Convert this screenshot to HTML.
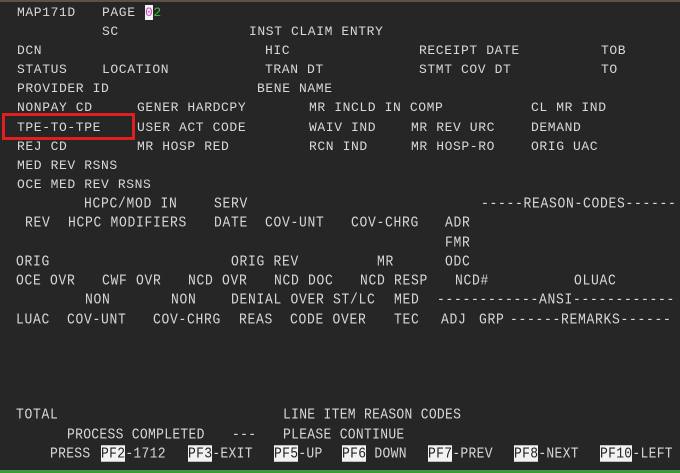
<!DOCTYPE html>
<html><head><meta charset="utf-8"><style>
html,body{margin:0;padding:0;}
body{width:680px;height:473px;background:#262627;position:relative;overflow:hidden;font-family:"Liberation Mono",monospace;color:#d8d8d8;}
.t{position:absolute;white-space:pre;font-size:13px;letter-spacing:0.6px;line-height:15px;}
.n{position:absolute;white-space:pre;font-size:13px;letter-spacing:0.7px;line-height:15px;transform:scaleY(1.1);}
.b{position:absolute;white-space:pre;font-size:13px;letter-spacing:0.3px;line-height:15px;transform:scaleY(1.1);}
.pf{background:#f2f2f2;color:#222;}
</style></head><body>
<div style="position:absolute;left:0;top:0;width:680px;height:2px;background:#5e5148"></div>
<div style="position:absolute;left:0;top:470px;width:680px;height:3px;background:#3a9a3a"></div>
<div style="position:absolute;left:2px;top:113px;width:127px;height:21px;border:3px solid #e02020"></div>

<div class="t" style="left:17px;top:5px">MAP171D</div>
<div class="t" style="left:102px;top:5px">PAGE</div>
<div class="t" style="left:145px;top:5px"><span style="background:#f4f4f4;color:#d040c0">0</span><span style="color:#3cbf3c">2</span></div>

<div class="t" style="left:102px;top:24px">SC</div>
<div class="t" style="left:249px;top:24px">INST CLAIM ENTRY</div>

<div class="t" style="left:17px;top:43px">DCN</div>
<div class="t" style="left:265px;top:43px">HIC</div>
<div class="t" style="left:419px;top:43px">RECEIPT DATE</div>
<div class="t" style="left:601px;top:43px">TOB</div>

<div class="t" style="left:17px;top:62px">STATUS</div>
<div class="t" style="left:102px;top:62px">LOCATION</div>
<div class="t" style="left:265px;top:62px">TRAN DT</div>
<div class="t" style="left:419px;top:62px">STMT COV DT</div>
<div class="t" style="left:601px;top:62px">TO</div>

<div class="t" style="left:17px;top:81px">PROVIDER ID</div>
<div class="t" style="left:257px;top:81px">BENE NAME</div>

<div class="t" style="left:17px;top:100px">NONPAY CD</div>
<div class="t" style="left:137px;top:100px">GENER HARDCPY</div>
<div class="t" style="left:309px;top:100px">MR INCLD IN COMP</div>
<div class="t" style="left:531px;top:100px">CL MR IND</div>

<div class="t" style="left:17px;top:120px">TPE-TO-TPE</div>
<div class="t" style="left:137px;top:120px">USER ACT CODE</div>
<div class="t" style="left:309px;top:120px">WAIV IND</div>
<div class="t" style="left:411px;top:120px">MR REV URC</div>
<div class="t" style="left:531px;top:120px">DEMAND</div>

<div class="t" style="left:17px;top:139px">REJ CD</div>
<div class="t" style="left:137px;top:139px">MR HOSP RED</div>
<div class="t" style="left:309px;top:139px">RCN IND</div>
<div class="t" style="left:411px;top:139px">MR HOSP-RO</div>
<div class="t" style="left:531px;top:139px">ORIG UAC</div>

<div class="t" style="left:17px;top:158px">MED REV RSNS</div>
<div class="t" style="left:17px;top:177px">OCE MED REV RSNS</div>

<div class="n" style="left:84px;top:196px">HCPC/MOD IN</div>
<div class="n" style="left:214px;top:196px">SERV</div>
<div class="n" style="left:481px;top:196px">-----REASON-CODES------</div>

<div class="n" style="left:25px;top:215px">REV</div>
<div class="n" style="left:68px;top:215px">HCPC MODIFIERS</div>
<div class="n" style="left:214px;top:215px">DATE</div>
<div class="n" style="left:265px;top:215px">COV-UNT</div>
<div class="n" style="left:351px;top:215px">COV-CHRG</div>
<div class="n" style="left:445px;top:215px">ADR</div>

<div class="n" style="left:445px;top:235px">FMR</div>

<div class="n" style="left:16px;top:254px">ORIG</div>
<div class="n" style="left:231px;top:254px">ORIG REV</div>
<div class="n" style="left:377px;top:254px">MR</div>
<div class="n" style="left:445px;top:254px">ODC</div>

<div class="n" style="left:16px;top:273px">OCE OVR</div>
<div class="n" style="left:102px;top:273px">CWF OVR</div>
<div class="n" style="left:188px;top:273px">NCD OVR</div>
<div class="n" style="left:274px;top:273px">NCD DOC</div>
<div class="n" style="left:360px;top:273px">NCD RESP</div>
<div class="n" style="left:455px;top:273px">NCD#</div>
<div class="n" style="left:574px;top:273px">OLUAC</div>

<div class="n" style="left:85px;top:292px">NON</div>
<div class="n" style="left:171px;top:292px">NON</div>
<div class="n" style="left:231px;top:292px">DENIAL OVER ST/LC</div>
<div class="n" style="left:394px;top:292px">MED</div>
<div class="n" style="left:437px;top:292px">------------ANSI------------</div>

<div class="n" style="left:16px;top:312px">LUAC</div>
<div class="n" style="left:67px;top:312px">COV-UNT</div>
<div class="n" style="left:153px;top:312px">COV-CHRG</div>
<div class="n" style="left:239px;top:312px">REAS</div>
<div class="n" style="left:290px;top:312px">CODE OVER</div>
<div class="n" style="left:394px;top:312px">TEC</div>
<div class="n" style="left:441px;top:312px">ADJ</div>
<div class="n" style="left:479px;top:312px">GRP</div>
<div class="n" style="left:510px;top:312px">------REMARKS------</div>

<div class="n" style="left:16px;top:407px">TOTAL</div>
<div class="b" style="left:283px;top:407px">LINE ITEM REASON CODES</div>
<div class="b" style="left:67px;top:427px">PROCESS COMPLETED</div>
<div class="b" style="left:232px;top:427px">---</div>
<div class="b" style="left:283px;top:427px">PLEASE CONTINUE</div>

<div class="b" style="left:50px;top:446px">PRESS</div>
<div class="b" style="left:101px;top:446px"><span class="pf">PF2</span>-1712</div>
<div class="b" style="left:188px;top:446px"><span class="pf">PF3</span>-EXIT</div>
<div class="b" style="left:274px;top:446px"><span class="pf">PF5</span>-UP</div>
<div class="b" style="left:342px;top:446px"><span class="pf">PF6</span> DOWN</div>
<div class="b" style="left:428px;top:446px"><span class="pf">PF7</span>-PREV</div>
<div class="b" style="left:514px;top:446px"><span class="pf">PF8</span>-NEXT</div>
<div class="b" style="left:600px;top:446px"><span class="pf">PF10</span>-LEFT</div>
</body></html>
